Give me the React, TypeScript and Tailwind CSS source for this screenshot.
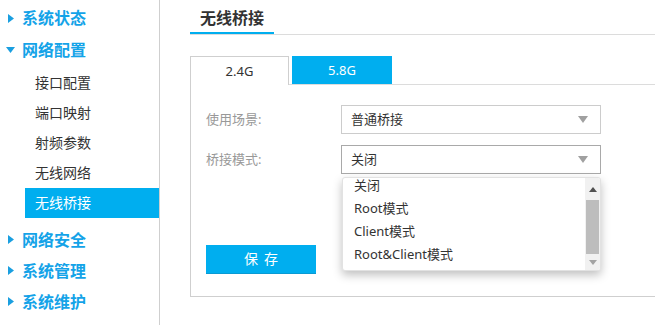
import React from "react";

const BLUE = "bg-[#00aeef]";

function TriRight() {
  return (
    <svg width="6" height="9" viewBox="0 0 6 9" className="shrink-0">
      <polygon points="0,0 6,4.5 0,9" fill="#1a9fe0" />
    </svg>
  );
}
function TriDown() {
  return (
    <svg width="9" height="6" viewBox="0 0 9 6" className="shrink-0">
      <polygon points="0,0 9,0 4.5,6" fill="#1a9fe0" />
    </svg>
  );
}
function SelArrow() {
  return (
    <svg width="10" height="7" viewBox="0 0 10 7">
      <polygon points="0,0 10,0 5,7" fill="#a0a0a0" />
    </svg>
  );
}

function Heading({ label, open, h }: { label: string; open?: boolean; h: string }) {
  return (
    <div className={`flex items-center ${h}`}>
      <div className="w-[22px] flex justify-center">
        <div className="ml-[-1px]">{open ? <TriDown /> : <TriRight />}</div>
      </div>
      <span className="text-[16px] font-bold text-[#14a3e8] leading-none">{label}</span>
    </div>
  );
}

function Sub({ label, active }: { label: string; active?: boolean }) {
  return active ? (
    <div className={`h-[30px] ml-[25px] pl-[10px] flex items-center ${BLUE} text-white text-[14px] leading-none`}>
      {label}
    </div>
  ) : (
    <div className="h-[30px] pl-[35px] flex items-center text-[#333] text-[14px] leading-none">{label}</div>
  );
}

export default function App() {
  return (
    <div className="w-[655px] h-[325px] overflow-hidden flex bg-white font-['Noto_Sans','Noto_Sans_CJK_SC',sans-serif]">
      {/* Sidebar */}
      <div className="w-[160px] shrink-0 border-r border-[#cfcfcf] pt-[2px]">
        <Heading label="系统状态" h="h-[32px]" />
        <Heading label="网络配置" open h="h-[32px]" />
        <div className="mt-[2px]">
          <Sub label="接口配置" />
          <Sub label="端口映射" />
          <Sub label="射频参数" />
          <Sub label="无线网络" />
          <Sub label="无线桥接" active />
        </div>
        <div className="mt-[6px]">
          <Heading label="网络安全" h="h-[31px]" />
          <Heading label="系统管理" h="h-[31px]" />
          <Heading label="系统维护" h="h-[31px]" />
        </div>
      </div>

      {/* Main */}
      <div className="flex-1 overflow-hidden pl-[30px]">
        <div className="w-[600px] border-b border-[#dcdcdc]">
          <div className="w-[84px] h-[34px] border-b-2 border-[#00aeef] flex items-center pl-[10px] pt-[4px]">
            <span className="text-[16px] font-bold text-[#333] leading-none">无线桥接</span>
          </div>
        </div>

        <div className="w-[600px] mt-[21px] flex items-end border-b border-[#dcdcdc]">
          <div className="w-[99px] h-[29px] -mb-px bg-white border border-b-0 border-[#cfcfcf] flex items-center justify-center text-[13px] text-[#333] leading-none">
            2.4G
          </div>
          <div className={`ml-[3px] w-[100px] h-[28px] ${BLUE} flex items-center justify-center text-[13px] text-white leading-none`}>
            5.8G
          </div>
        </div>

        <div className="relative w-[600px] border-l border-b border-[#cfcfcf] pl-[15px] pt-[20px] pb-[22px]">
          <div className="flex items-center">
            <div className="w-[135px] text-[13px] text-[#999] leading-none">使用场景:</div>
            <div className="w-[260px] h-[29px] border border-[#cccccc] flex items-center justify-between pl-[9px] pr-[12px]">
              <span className="text-[13px] text-[#333] leading-none">普通桥接</span>
              <SelArrow />
            </div>
          </div>
          <div className="flex items-center mt-[11px]">
            <div className="w-[135px] text-[13px] text-[#999] leading-none">桥接模式:</div>
            <div className="w-[260px] h-[29px] border border-[#a9a9a9] flex items-center justify-between pl-[9px] pr-[12px]">
              <span className="text-[13px] text-[#333] leading-none">关闭</span>
              <SelArrow />
            </div>
          </div>
          <div className={`mt-[71px] w-[110px] h-[29px] ${BLUE} border-b border-[#0a9ad3] flex items-center justify-center text-white text-[14px] tracking-[6px] leading-none`}>
            <span className="pl-[6px]">保存</span>
          </div>

          {/* Dropdown list */}
          <div className="absolute left-[151px] top-[92px] w-[259px] h-[94px] bg-white rounded-[3px] border border-[#e2e2e2] shadow-[0_4px_10px_rgba(0,0,0,0.25)] overflow-hidden flex">
            <div className="flex-1 overflow-hidden">
              <div className="-mt-[4px]">
                {["关闭", "Root模式", "Client模式", "Root&Client模式"].map((t) => (
                  <div key={t} className="h-[23px] flex items-center pl-[11px] text-[13px] text-[#333] leading-none">
                    {t}
                  </div>
                ))}
              </div>
            </div>
            <div className="w-[15px] h-full bg-[#f1f1f1] flex flex-col items-center">
              <div className="h-[22px] flex items-center justify-center">
                <svg width="8" height="5" viewBox="0 0 8 5">
                  <polygon points="0,5 8,5 4,0" fill="#505050" />
                </svg>
              </div>
              <div className="w-[13px] h-[54px] bg-[#bdbdbd]" />
              <div className="flex-1 flex items-center justify-center">
                <svg width="8" height="5" viewBox="0 0 8 5">
                  <polygon points="0,0 8,0 4,5" fill="#a3a3a3" />
                </svg>
              </div>
            </div>
          </div>
        </div>
      </div>
    </div>
  );
}
